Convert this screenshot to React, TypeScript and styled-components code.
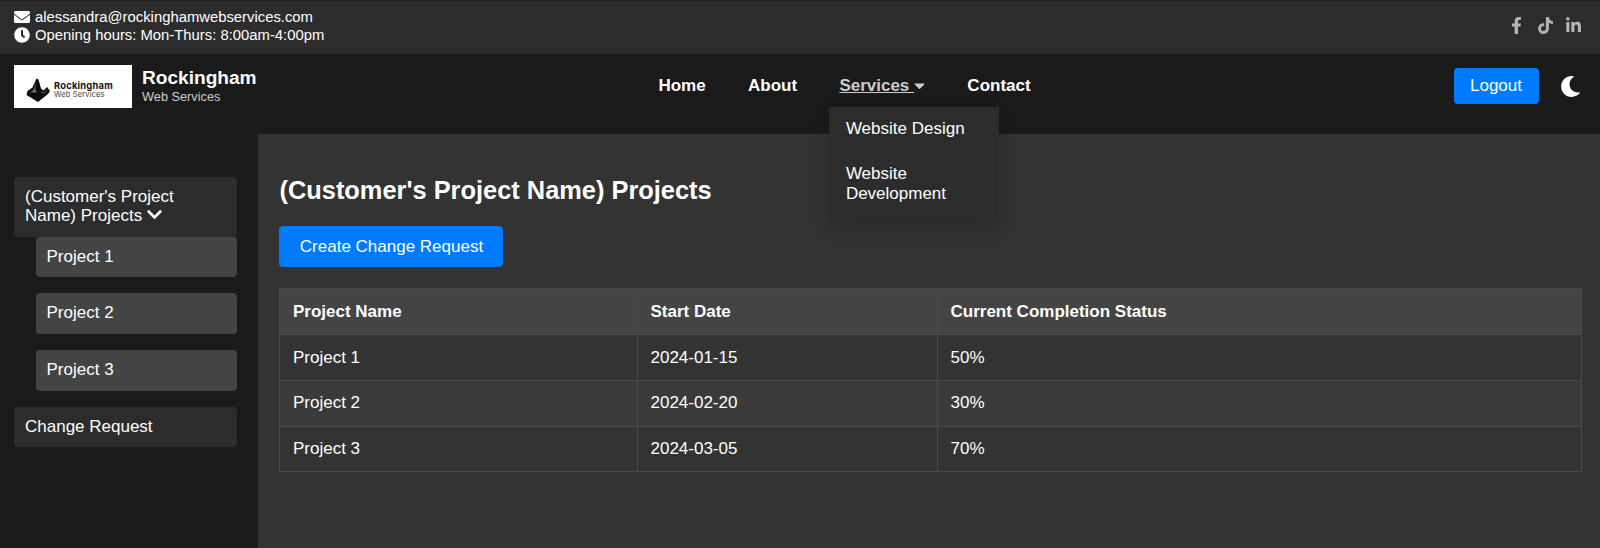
import React from 'react';
import styled, { createGlobalStyle } from 'styled-components';
import {
  FaEnvelope, FaClock, FaFacebookF, FaTiktok, FaLinkedinIn, FaMoon, FaCaretDown, FaChevronDown,
} from 'react-icons/fa';

const GlobalStyle = createGlobalStyle`
  *, *::before, *::after { box-sizing: border-box; }
  body {
    margin: 0;
    background: #333;
    color: #fff;
    font-family: "Liberation Sans", Arial, sans-serif;
    font-size: 17px;
    overflow: hidden;
  }
  a { color: inherit; text-decoration: none; }
  svg { display: block; }
`;

const Page = styled.div`
  display: flex;
  flex-direction: column;
  height: 548px;
`;

const TopBar = styled.div`
  display: flex;
  justify-content: space-between;
  align-items: flex-start;
  height: 54.4px;
  padding: 7px 18px 0 14px;
  background: #2c2c2c;
  border-top: 1px solid #242424;
`;

const ContactList = styled.div`
  display: flex;
  flex-direction: column;
`;

const ContactLine = styled.div`
  display: flex;
  align-items: center;
  gap: 5px;
  height: 18px;
  font-size: 14.84px;
  line-height: 18px;
  white-space: nowrap;
  svg { width: 16px; height: 16px; }
`;

const Socials = styled.div`
  display: flex;
  align-items: center;
  gap: 11.5px;
  padding-top: 9px;
  color: #b4b4b4;
  svg { width: 17px; height: 17px; }
`;

const Header = styled.header`
  display: flex;
  justify-content: space-between;
  align-items: flex-start;
  height: 80px;
  padding: 11px 19px 0 14px;
  background: #1a1a1a;
`;

const Brand = styled.div`
  display: flex;
  gap: 10.5px;
`;

const LogoBox = styled.div`
  display: flex;
  align-items: center;
  width: 117.5px;
  height: 43px;
  padding: 6px 0 0 12px;
  gap: 4px;
  background: #fff;
  color: #111;
`;

const LogoText = styled.div`
  font-family: Inter, "Liberation Sans", sans-serif;
  font-size: 7.6px;
  line-height: 9px;
  letter-spacing: 0.1px;
  color: #444;
  white-space: nowrap;
  strong {
    display: block;
    color: #111;
    font-size: 9.3px;
    letter-spacing: 0.25px;
  }
`;

const BrandText = styled.div`
  padding-top: 2px;
`;

const BrandName = styled.div`
  font-size: 19.1px;
  font-weight: 700;
  line-height: 22px;
`;

const BrandSub = styled.div`
  font-size: 12.75px;
  line-height: 16px;
  color: #ccc;
`;

const Nav = styled.nav`
  display: flex;
  gap: 42.3px;
  padding: 10.6px 21px 0 0;
  font-weight: 700;
  line-height: 20px;
`;

const NavItem = styled.div`
  position: relative;
`;

const NavLink = styled.a<{ $active?: boolean }>`
  display: flex;
  align-items: center;
  color: ${(p) => (p.$active ? '#ccc' : '#fff')};
  white-space: pre;
  span {
    text-decoration: ${(p) => (p.$active ? 'underline' : 'none')};
  }
  svg { width: 11px; height: 17px; }
`;

const Dropdown = styled.div`
  position: absolute;
  top: 31.2px;
  left: -10.5px;
  width: 170px;
  height: 113px;
  padding: 12px 17px;
  background: #2c2c2c;
  box-shadow: 0 8px 17px rgba(0, 0, 0, 0.2);
  font-weight: 400;
  line-height: 20px;
  a { display: block; }
  a + a { margin-top: 25px; }
`;

const Actions = styled.div`
  display: flex;
  align-items: center;
  justify-content: flex-end;
  gap: 21.5px;
  padding-top: 3px;
  svg { width: 21px; height: 21px; }
`;

const Button = styled.button<{ $large?: boolean }>`
  display: block;
  width: ${(p) => (p.$large ? '224px' : '85px')};
  height: ${(p) => (p.$large ? '41px' : '36px')};
  padding: 0;
  border: 0;
  border-radius: 4px;
  background: #007bff;
  color: #fff;
  font: inherit;
  line-height: 20px;
`;

const Body = styled.div`
  display: flex;
  flex: 1;
`;

const Sidebar = styled.aside`
  width: 258.2px;
  padding: 42.2px 21px 0 14px;
  background: #1a1a1a;
`;

const SideItem = styled.a<{ $sub?: boolean }>`
  display: block;
  margin: 0 0 ${(p) => (p.$sub ? '16.1px' : '0')} ${(p) => (p.$sub ? '21.5px' : '0')};
  padding: 10px 11px 10.7px;
  border-radius: 4px;
  background: ${(p) => (p.$sub ? '#444' : '#2c2c2c')};
  line-height: 19.8px;
  svg {
    display: inline-block;
    width: 15px;
    height: 17px;
    vertical-align: -2px;
  }
`;

const Main = styled.main`
  flex: 1;
  padding: 43px 18.5px 0 21.3px;
`;

const Title = styled.h1`
  margin: 0 0 22px;
  font-size: 25.4px;
  line-height: 27px;
`;

const Table = styled.table`
  width: 100%;
  margin-top: 21px;
  border-collapse: collapse;
  table-layout: fixed;
`;

const Row = styled.tr<{ $shade?: string }>`
  height: 45.75px;
  background: ${(p) => p.$shade || 'transparent'};
`;

const Cell = styled.td`
  padding: 0 12.5px;
  border: 1px solid #4a4a4a;
  text-align: left;
  line-height: 20px;
`;

const Column = styled.col<{ $width?: string }>`
  width: ${(p) => p.$width || 'auto'};
`;

const LogoMark = () => (
  <svg width="24" height="24" viewBox="0 0 24 24">
    <path d="M10.5 0.5 L12.5 1.5 L15 10.5 L17.5 12.5 L21 9 L24 13 L22 16 L12 24 L0.5 17 L1.5 13 L6.5 9.5 Z" fill="#0c0c0c" />
    <path d="M10.2 4 L8.6 9.5 L7 12.8 L4 14.2 L10.5 14.6 L9.2 11 Z" fill="#777" />
    <path d="M15 14 L18.5 15 L20.5 12.2" stroke="#777" strokeWidth="0.7" fill="none" />
  </svg>
);

const projects = [
  ['Project 1', '2024-01-15', '50%'],
  ['Project 2', '2024-02-20', '30%'],
  ['Project 3', '2024-03-05', '70%'],
];

export default function App() {
  return (
    <Page>
      <GlobalStyle />
      <TopBar>
        <ContactList>
          <ContactLine><FaEnvelope />alessandra@rockinghamwebservices.com</ContactLine>
          <ContactLine><FaClock />Opening hours: Mon-Thurs: 8:00am-4:00pm</ContactLine>
        </ContactList>
        <Socials><FaFacebookF /><FaTiktok /><FaLinkedinIn /></Socials>
      </TopBar>
      <Header>
        <Brand>
          <LogoBox>
            <LogoMark />
            <LogoText><strong>Rockingham</strong>Web Services</LogoText>
          </LogoBox>
          <BrandText>
            <BrandName>Rockingham</BrandName>
            <BrandSub>Web Services</BrandSub>
          </BrandText>
        </Brand>
        <Nav>
          <NavItem><NavLink href="#">Home</NavLink></NavItem>
          <NavItem><NavLink href="#">About</NavLink></NavItem>
          <NavItem>
            <NavLink href="#" $active><span>{'Services '}</span><FaCaretDown /></NavLink>
            <Dropdown>
              <a href="#">Website Design</a>
              <a href="#">Website Development</a>
            </Dropdown>
          </NavItem>
          <NavItem><NavLink href="#">Contact</NavLink></NavItem>
        </Nav>
        <Actions><Button>Logout</Button><FaMoon /></Actions>
      </Header>
      <Body>
        <Sidebar>
          <SideItem href="#">(Customer's Project Name) Projects <FaChevronDown /></SideItem>
          {projects.map(([name]) => <SideItem key={name} href="#" $sub>{name}</SideItem>)}
          <SideItem href="#">Change Request</SideItem>
        </Sidebar>
        <Main>
          <Title>(Customer's Project Name) Projects</Title>
          <Button $large>Create Change Request</Button>
          <Table>
            <colgroup><Column $width="357.5px" /><Column $width="300px" /><Column /></colgroup>
            <thead>
              <Row $shade="#444">
                <Cell as="th">Project Name</Cell>
                <Cell as="th">Start Date</Cell>
                <Cell as="th">Current Completion Status</Cell>
              </Row>
            </thead>
            <tbody>
              {projects.map((row, i) => (
                <Row key={row[0]} $shade={i % 2 ? '#3a3a3a' : undefined}>
                  {row.map((value) => <Cell key={value}>{value}</Cell>)}
                </Row>
              ))}
            </tbody>
          </Table>
        </Main>
      </Body>
    </Page>
  );
}
